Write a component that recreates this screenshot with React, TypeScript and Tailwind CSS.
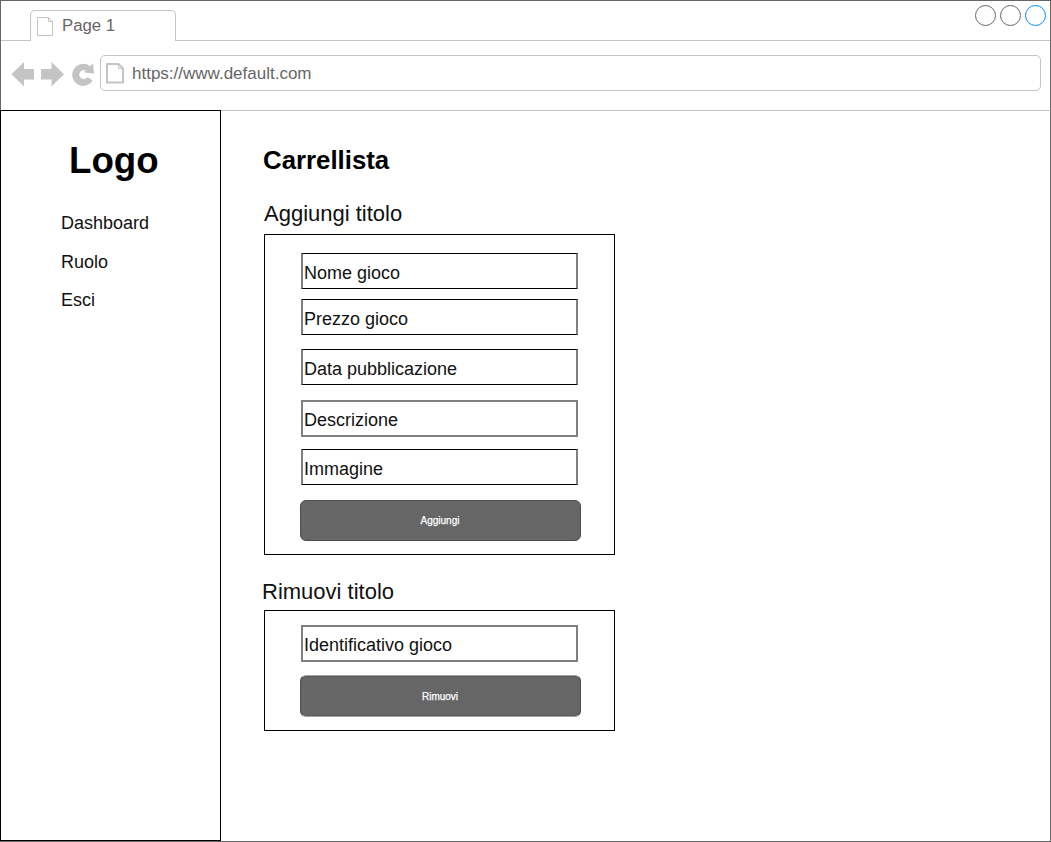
import type { ReactNode } from "react";

function PageIcon({ bold = false }: { bold?: boolean }) {
  return bold ? (
    <svg width="20" height="22" viewBox="0 0 20 22" fill="none" stroke="#c4c4c4" strokeWidth="2">
      <path d="M2 2H13.5L18 6.5V20.5H2Z" />
      <path d="M13.5 2V6.5H18" strokeWidth="1" />
    </svg>
  ) : (
    <svg width="18" height="20" viewBox="0 0 18 20" fill="none" stroke="#c4c4c4" strokeWidth="1">
      <path d="M1.5 1.5H12.5L16.5 5.5V19.5H1.5Z" />
      <path d="M12.5 1.5V5.5H16.5" />
    </svg>
  );
}

function NavIcons() {
  return (
    <svg width="84" height="28" viewBox="0 0 84 28" fill="#c4c4c4">
      <path d="M0.5 14.3L13 2V9H23V19.5H13V26.5Z" />
      <path d="M53 14.3L40.5 2V9H30V19.5H40.5V26.5Z" />
      <path d="M79 6.2L82 3.3L83 13.8L72.5 12.2L75 10.6A4.5 4.5 0 1 0 76.6 17L81.6 20.6A11 11 0 1 1 79 6.2Z" />
    </svg>
  );
}

function Field({ label, gray = false }: { label: string; gray?: boolean }) {
  return (
    <div
      className={
        gray
          ? "h-[37px] w-[277px] border-2 border-[#808080] pl-px pt-[8px] text-[18px] leading-[20px] text-[#111]"
          : "h-9 w-[277px] border-x-2 border-y border-x-[#808080] border-y-black pl-px pt-[9px] text-[18px] leading-[20px] text-[#111]"
      }
    >
      {label}
    </div>
  );
}

function Button({ children, soft = false }: { children: ReactNode; soft?: boolean }) {
  return (
    <button
      className={
        soft
          ? "-ml-px flex h-[42px] w-[281px] items-center justify-center rounded-md border border-x-[#4d4d4d] border-y-[#a6a6a6] bg-[#666] pr-px text-[10px] text-white shadow-[inset_0_1px_0_#595959,inset_0_-1px_0_#595959] [-webkit-text-stroke:0.25px_white]"
          : "-ml-px flex h-[41px] w-[281px] items-center justify-center rounded-md border border-[#4d4d4d] bg-[#666] pr-px text-[10px] text-white [-webkit-text-stroke:0.25px_white]"
      }
    >
      {children}
    </button>
  );
}

export default function App() {
  return (
    <div className="flex h-[842px] w-[1051px] flex-col bg-white font-['Liberation_Sans',Arial,sans-serif] text-black">
      <header className="h-[110px] shrink-0 border-x border-t border-[#666] text-[17px] text-[#666]">
        <div className="flex h-10 items-stretch">
          <div className="w-[29px] border-b border-[#c4c4c4]" />
          <div className="mt-[9px] flex w-[146px] rounded-t-[5px] border-x border-t border-[#c4c4c4] pl-[5px] pt-[5px]">
            <PageIcon />
            <span className="ml-2 text-[16.8px] leading-[20px]">Page 1</span>
          </div>
          <div className="flex flex-1 justify-end gap-1 border-b border-[#c4c4c4] pr-1 pt-1">
            <span className="size-[21px] rounded-full border border-[#666]" />
            <span className="size-[21px] rounded-full border border-[#666]" />
            <span className="size-[21px] rounded-full border border-[#008cff]" />
          </div>
        </div>
        <div className="flex pl-[10px] pt-[14px]">
          <div className="mt-[5px] h-7 w-[84px]">
            <NavIcons />
          </div>
          <div className="ml-[5px] flex h-9 w-[941px] rounded-[5px] border border-[#c4c4c4] pl-1 pt-[6px]">
            <PageIcon bold />
            <span className="ml-[7px] mt-[2px] leading-[20px]">https://www.default.com</span>
          </div>
        </div>
      </header>
      <div className="flex flex-1">
        <aside className="flex h-[731px] w-[221px] shrink-0 flex-col border border-black">
          <div className="pl-[68px] pt-[29px] text-[36.7px] font-bold leading-[42px]">Logo</div>
          <nav className="flex flex-col pl-[60px] pt-[31px] text-[18px] leading-[20px] text-[#111]">
            <a>Dashboard</a>
            <a className="mt-[19px]">Ruolo</a>
            <a className="mt-[18px]">Esci</a>
          </nav>
        </aside>
        <main className="flex flex-1 flex-col border-t border-[#c4c4c4] border-r border-r-[#666] pl-[43px]">
          <h1 className="-ml-px mt-[34px] text-[25.8px] font-bold leading-[30px]">Carrellista</h1>
          <h2 className="mt-[27px] text-[22px] leading-[24px] text-[#111]">Aggiungi titolo</h2>
          <section className="mt-[8px] flex h-[321px] w-[351px] flex-col border border-black pl-9 pt-[18px]">
            <Field label="Nome gioco" />
            <div className="mt-[10px]"><Field label="Prezzo gioco" /></div>
            <div className="mt-[14px]"><Field label="Data pubblicazione" /></div>
            <div className="mt-[15px]"><Field label="Descrizione" gray /></div>
            <div className="mt-[12px]"><Field label="Immagine" /></div>
            <div className="mt-[15px]"><Button>Aggiungi</Button></div>
          </section>
          <h2 className="-ml-[2px] mt-[25px] text-[22px] leading-[24px] text-[#111]">Rimuovi titolo</h2>
          <section className="mt-[6px] flex h-[121px] w-[351px] flex-col border border-black pl-9 pt-[14px]">
            <Field label="Identificativo gioco" gray />
            <div className="mt-[13px]"><Button soft>Rimuovi</Button></div>
          </section>
        </main>
      </div>
      <div className="h-px shrink-0 bg-[#666]" />
    </div>
  );
}
